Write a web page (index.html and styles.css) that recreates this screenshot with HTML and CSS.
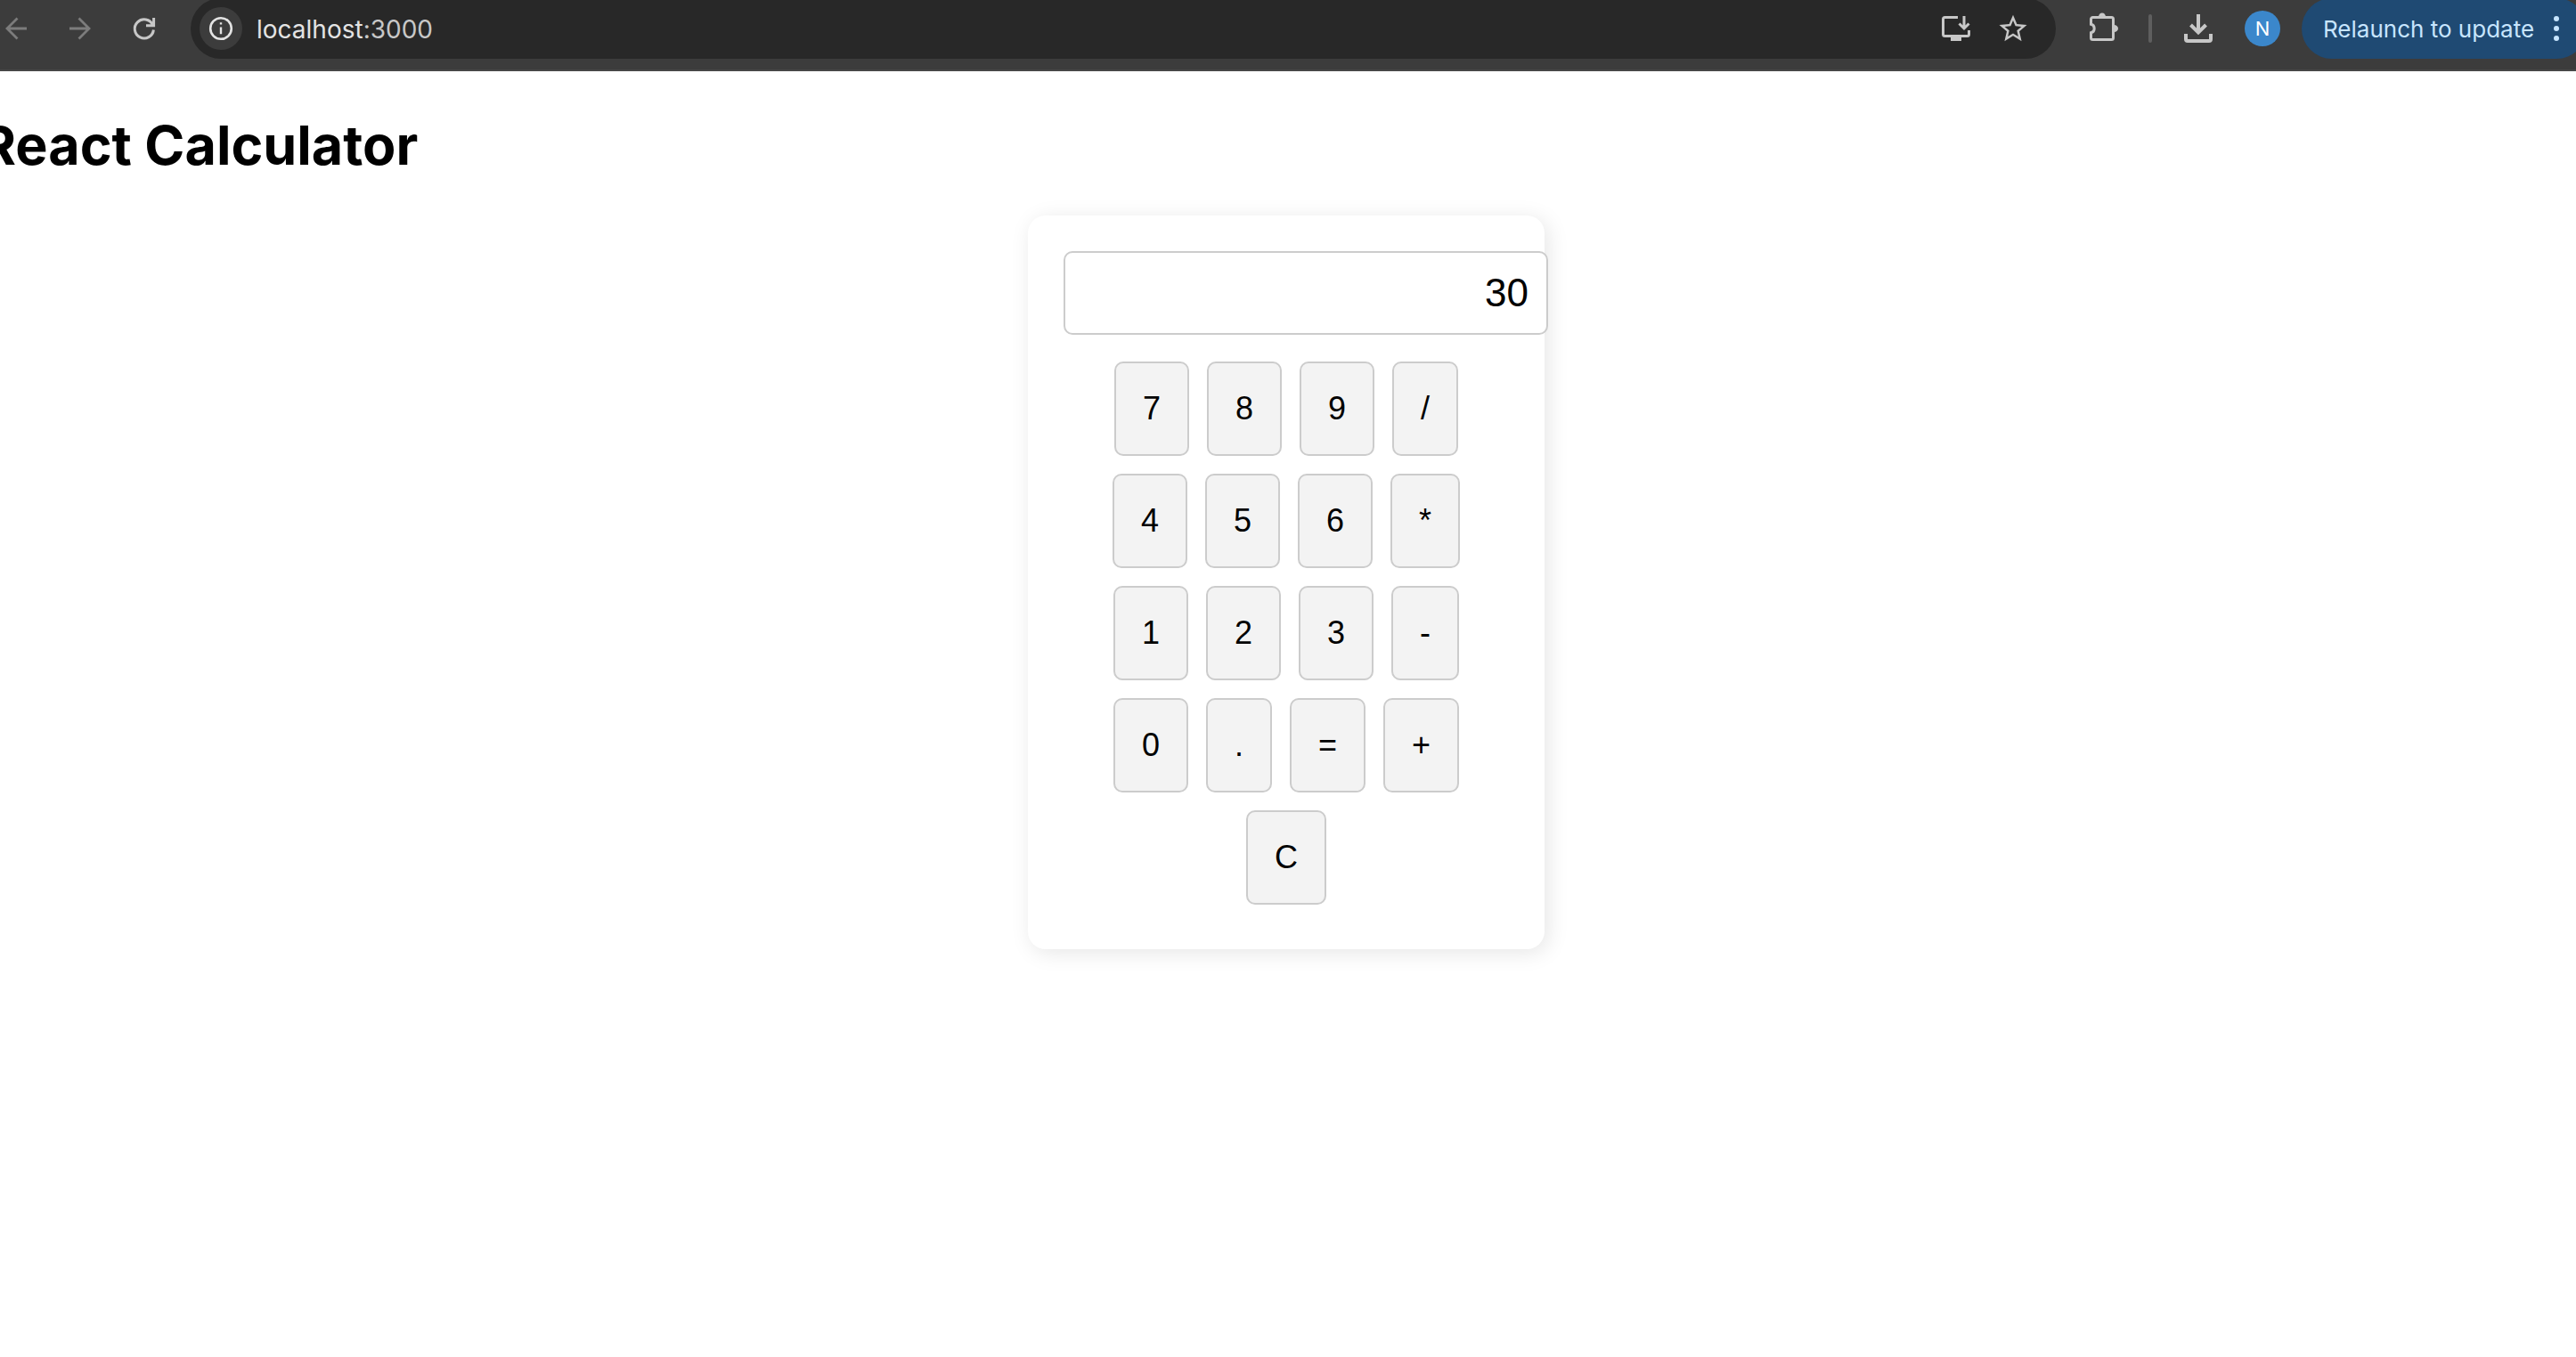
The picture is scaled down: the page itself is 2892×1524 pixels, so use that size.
FILE: index.html
```html
<!DOCTYPE html>
<html lang="en">
<head>
  <meta charset="utf-8">
  <title>React Calculator</title>
  <link rel="stylesheet" href="styles.css">
</head>
<body>
  <header class="toolbar">
    <nav class="nav" aria-label="History">
      <button class="icon-button dim" type="button" aria-label="Back">
        <svg class="icon" viewBox="0 0 36 36"><path d="M30 18H8M19.500 6.500L8 18L19.500 29.500" stroke-width="2.800"/></svg>
      </button>
      <button class="icon-button dim" type="button" aria-label="Forward">
        <svg class="icon" viewBox="0 0 36 36"><path d="M6 18H28M16.500 6.500L28 18L16.500 29.500" stroke-width="2.800"/></svg>
      </button>
      <button class="icon-button" type="button" aria-label="Reload">
        <svg class="icon" viewBox="0 0 36 36"><path d="M27.500 14A10.600 10.600 0 1 0 28.400 19.500M28.600 6V14.700H20" stroke-width="3"/></svg>
      </button>
    </nav>
    <div class="omnibox">
      <button class="site-info" type="button" aria-label="Site information">
        <svg class="icon" viewBox="0 0 36 36"><circle cx="18" cy="18" r="11.800" stroke-width="2.600"/><path d="M18 16.500V24.300M18 11.200V13.600" stroke-width="2.400"/></svg>
      </button>
      <div class="url" role="textbox" aria-label="Address" contenteditable="true" spellcheck="false">localhost<span class="port">:3000</span></div>
      <div class="omnibox-actions">
        <button class="icon-button" type="button" aria-label="Install app">
          <svg class="icon" viewBox="0 0 36 36"><path d="M20 5.500H5.500a2 2 0 0 0-2 2V24.500a2 2 0 0 0 2 2H30.500a2 2 0 0 0 2-2V20M27 4V17.500M21.500 12.500L27 18L32.500 12.500" stroke-width="3"/><path class="solid" d="M12 27h12v5h-12z"/></svg>
        </button>
        <button class="icon-button" type="button" aria-label="Bookmark">
          <svg class="icon" viewBox="0 0 36 36"><path class="solid" transform="translate(-.6 -.4) scale(1.55)" d="M22 9.240l-7.190-.62L12 2 9.190 8.630 2 9.240l5.460 4.730L5.820 21 12 17.270 18.180 21l-1.630-7.030L22 9.240zM12 15.400l-3.760 2.270 1-4.280-3.320-2.880 4.380-.38L12 6.100l1.710 4.040 4.380.38-3.320 2.880 1 4.280L12 15.400z"/></svg>
        </button>
      </div>
    </div>
    <button class="icon-button extensions" type="button" aria-label="Extensions">
      <svg class="icon" viewBox="0 0 36 36"><path d="M3.500 13.200V7.500a2 2 0 0 1 2-2H26.500a2 2 0 0 1 2 2V28.500a2 2 0 0 1-2 2H5.500a2 2 0 0 1-2-2V22.800C6 22.300 7.200 20.300 7.200 18S6 13.700 3.500 13.200z" stroke-width="3"/><path class="solid" d="M12 5a4 4.500 0 0 1 8 0zM29.500 14a4.500 4 0 0 1 0 8z"/></svg>
    </button>
    <span class="divider"></span>
    <button class="icon-button downloads" type="button" aria-label="Downloads">
      <svg class="icon" viewBox="0 0 36 36"><path d="M18 2V22.500M9.500 14L18 22.500L26.500 14M4 24v6a2 2 0 0 0 2 2h24a2 2 0 0 0 2-2V24" stroke-width="4"/></svg>
    </button>
    <button class="avatar" type="button" aria-label="Profile">N</button>
    <button class="relaunch" type="button">
      <span class="relaunch-label">Relaunch to update</span>
      <svg class="dots" viewBox="0 0 8 36"><circle cx="4" cy="7" r="3"/><circle cx="4" cy="18" r="3"/><circle cx="4" cy="29" r="3"/></svg>
    </button>
  </header>

  <main class="page">
    <h1 class="title">React Calculator</h1>
    <section class="calculator" aria-label="Calculator">
      <input class="display" type="text" value="30" aria-label="Result" readonly>
      <div class="keypad">
        <div class="row">
          <button class="key" type="button">7</button>
          <button class="key" type="button">8</button>
          <button class="key" type="button">9</button>
          <button class="key" type="button">/</button>
        </div>
        <div class="row">
          <button class="key" type="button">4</button>
          <button class="key" type="button">5</button>
          <button class="key" type="button">6</button>
          <button class="key" type="button">*</button>
        </div>
        <div class="row">
          <button class="key" type="button">1</button>
          <button class="key" type="button">2</button>
          <button class="key" type="button">3</button>
          <button class="key" type="button">-</button>
        </div>
        <div class="row">
          <button class="key" type="button">0</button>
          <button class="key" type="button">.</button>
          <button class="key" type="button">=</button>
          <button class="key" type="button">+</button>
        </div>
        <div class="row">
          <button class="key" type="button">C</button>
        </div>
      </div>
    </section>
  </main>
</body>
</html>
```
FILE: styles.css
```css
body {
  margin: 0;
  overflow-x: hidden;
  background: #fff;
  color: #000;
  font-family: Inter, "Liberation Sans", sans-serif;
}

button {
  border: 0;
  padding: 0;
  background: none;
  font-family: inherit;
}

/* Browser toolbar */
.toolbar {
  display: flex;
  align-items: center;
  height: 64px;
  padding-bottom: 14px;
  border-bottom: 2px solid #474747;
  background: #3c3c3c;
  color: #c7c7c7;
  overflow: hidden;
}

.nav {
  display: flex;
  gap: 36px;
}

.icon-button {
  display: flex;
  flex: none;
  color: inherit;
}

.dim {
  color: #7c7c7c;
}

.icon {
  width: 36px;
  height: 36px;
  fill: none;
  stroke: currentColor;
}

.solid {
  fill: currentColor;
  stroke: none;
}

.omnibox {
  display: flex;
  flex: 1;
  align-items: center;
  box-sizing: border-box;
  height: 68px;
  margin-left: 34px;
  padding: 0 30px 0 10px;
  border-radius: 34px;
  background: #282828;
}

.site-info {
  display: flex;
  align-items: center;
  justify-content: center;
  width: 48px;
  height: 48px;
  border-radius: 50%;
  background: #3c3c3c;
  color: #e3e3e3;
}

.url {
  flex: 1;
  margin-left: 16px;
  padding-top: 2px;
  color: #e3e3e3;
  font-size: 28px;
  line-height: 34px;
}

.port {
  color: #c7c7c7;
}

.omnibox-actions {
  display: flex;
  gap: 28px;
}

.extensions {
  margin-left: 36px;
}

.divider {
  width: 4px;
  height: 32px;
  margin-left: 32px;
  border-radius: 2px;
  background: #5e5e5e;
}

.downloads {
  margin-left: 34px;
}

.avatar {
  width: 40px;
  height: 40px;
  margin-left: 34px;
  border-radius: 50%;
  background: #3b87cb;
  color: #fff;
  font-size: 22px;
  line-height: 40px;
}

.relaunch {
  display: flex;
  flex: none;
  align-items: center;
  justify-content: space-between;
  box-sizing: border-box;
  width: 320px;
  height: 68px;
  margin: 0 -12px 0 24px;
  padding: 0 30px 0 24px;
  border-radius: 34px;
  background: #1f4a73;
  color: #c7e5ff;
  font-size: 26px;
  line-height: 34px;
  white-space: nowrap;
}

.relaunch-label {
  padding-top: 2px;
}

.dots {
  width: 8px;
  height: 36px;
  fill: currentColor;
}

/* Calculator page */
.page {
  padding: 42px 4px 40px 0;
}

.title {
  margin: 0 0 38px -22px;
  font-size: 61px;
  font-weight: 700;
  line-height: 82px;
}

.calculator {
  width: 500px;
  margin: 0 auto;
  padding: 40px;
  border-radius: 20px;
  background: #fff;
  box-shadow: 4px 4px 24px rgba(0, 0, 0, 0.1);
}

/* The padding and border are added to the full width, so the display reaches past the card's right edge. */
.display {
  display: block;
  box-sizing: content-box;
  width: 100%;
  height: 50px;
  margin-bottom: 30px;
  padding: 20px;
  border: 2px solid #ccc;
  border-radius: 10px;
  background: #fff;
  color: #000;
  font-family: "Liberation Sans", Arial, sans-serif;
  font-size: 44px;
  text-align: right;
}

.keypad {
  display: grid;
  gap: 20px;
  padding-bottom: 10px;
}

.row {
  display: flex;
  justify-content: center;
  gap: 20px;
}

.key {
  padding: 30px;
  border: 2px solid #ccc;
  border-radius: 10px;
  background: #f3f3f3;
  color: #000;
  font-family: "Liberation Sans", Arial, sans-serif;
  font-size: 36px;
  line-height: 42px;
}
```
